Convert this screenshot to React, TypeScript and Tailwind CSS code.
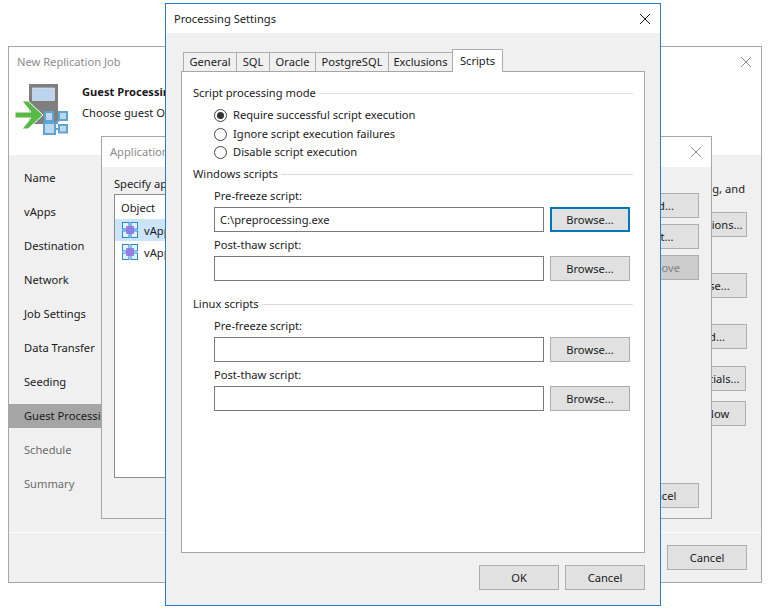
const font = "font-['Noto_Sans','Open_Sans',sans-serif]";

function X({ c }: { c: string }) {
  return (
    <svg width="12" height="12" viewBox="0 0 12 12" className="shrink-0">
      <path d="M1 1 L11 11 M11 1 L1 11" stroke={c} strokeWidth="1" fill="none" />
    </svg>
  );
}

function Btn({ label, w = "w-[80px]", tone = "normal", extra = "" }: { label: string; w?: string; tone?: "normal" | "focus" | "disabled"; extra?: string }) {
  const cls =
    tone === "focus"
      ? "border-2 border-[#0078b4] bg-[#e1e1e1] text-[#1a1a1a]"
      : tone === "disabled"
        ? "border border-[#adadad] bg-[#cccccc] text-[#838383]"
        : "border border-[#adadad] bg-[#e1e1e1] text-[#1a1a1a]";
  return <div className={`${w} h-[25px] flex items-center justify-center shrink-0 whitespace-nowrap ${cls} ${extra}`}>{label}</div>;
}

function VApp() {
  return (
    <svg width="16" height="16" viewBox="0 0 16 16" className="shrink-0">
      <g fill="#e4f2fb" stroke="#2b86d6" strokeWidth="1">
        <rect x="0.5" y="0.5" width="6.5" height="6.5" />
        <rect x="9" y="0.5" width="6.5" height="6.5" />
        <rect x="0.5" y="9" width="6.5" height="6.5" />
        <rect x="9" y="9" width="6.5" height="6.5" />
      </g>
      <rect x="4" y="4" width="8" height="8" fill="#8f74e2" fillOpacity="0.85" />
    </svg>
  );
}

function WizardIcon() {
  return (
    <svg width="54" height="52" viewBox="0 0 54 52" className="shrink-0">
      <rect x="14" y="0" width="29" height="40" fill="#7f7f7f" />
      <rect x="17.5" y="4" width="22" height="12.5" fill="#bcd5ee" stroke="#e8eff7" strokeWidth="0.6" />
      <path d="M7 17 H13 L28 31 L13 45 H7 L16 34 H0 V28 H16 Z" fill="#58b947" stroke="#ffffff" strokeWidth="1" />
      <g stroke="#5fa3cf" strokeWidth="2" fill="#bcd7f0">
        <path d="M39 41 L45 35 M40 45 L45 45" fill="none" />
        <rect x="30" y="28" width="8" height="9" />
        <rect x="44" y="28" width="8" height="8" />
        <rect x="29" y="39" width="11" height="11" />
        <rect x="44" y="41" width="8" height="7.5" />
      </g>
    </svg>
  );
}

function Radio({ label, on = false, extra = "" }: { label: string; on?: boolean; extra?: string }) {
  return (
    <div className={`flex items-center h-[18px] ${extra}`}>
      <div className="w-[13px] h-[13px] rounded-full border border-[#444444] bg-white flex items-center justify-center shrink-0">
        {on && <div className="w-[7px] h-[7px] rounded-full bg-[#333333]" />}
      </div>
      <span className="ml-[6px]">{label}</span>
    </div>
  );
}

function Group({ title, extra = "" }: { title: string; extra?: string }) {
  return (
    <div className={`flex items-center h-[16px] ${extra}`}>
      <span className="whitespace-nowrap mr-[3px]">{title}</span>
      <div className="flex-1 h-px bg-[#dcdcdc]" />
    </div>
  );
}

function ScriptRow({ label, value = "", focus = false, gap = "" }: { label: string; value?: string; focus?: boolean; gap?: string }) {
  return (
    <div className={`pl-[21px] ${gap}`}>
      <div className="h-[16px] flex items-center">{label}</div>
      <div className="flex gap-[6px] mt-[3px] pr-[3px]">
        <div className="w-[330px] h-[25px] border border-[#7a7a7a] bg-white flex items-center pl-[5px] text-[#222222]">{value}</div>
        <Btn label="Browse..." tone={focus ? "focus" : "normal"} />
      </div>
    </div>
  );
}

const tabs = [
  ["General", "w-[54px]"],
  ["SQL", "w-[34px]"],
  ["Oracle", "w-[47px]"],
  ["PostgreSQL", "w-[74px]"],
  ["Exclusions", "w-[65px]"],
];

const nav = ["Name", "vApps", "Destination", "Network", "Job Settings", "Data Transfer", "Seeding", "Guest Processing", "Schedule", "Summary"];

export default function App() {
  return (
    <div className={`relative w-[770px] h-[611px] bg-white overflow-hidden text-[11.15px] leading-[16px] text-[#1a1a1a] ${font}`}>
      {/* Wizard window */}
      <div className="absolute left-[8px] top-[46px] w-[754px] h-[537px] border border-[#a6a6a6] bg-[#f0f0f0] flex flex-col">
        <div className="bg-white h-[108px] shrink-0">
          <div className="h-[29px] flex items-center justify-between pl-[8px] pr-[9px] text-[#8c8c8c]">
            <span>New Replication Job</span>
            <X c="#8c8c8c" />
          </div>
          <div className="flex pl-[6px] pt-[8px]">
            <WizardIcon />
            <div className="ml-[13px] -mt-[2px]">
              <div className="font-bold h-[20px] flex items-center whitespace-nowrap">Guest Processing</div>
              <div className="h-[20px] mt-px flex items-center whitespace-nowrap">Choose guest OS processing options available for running VMs.</div>
            </div>
          </div>
        </div>
        <div className="flex flex-1 min-h-0">
          <div className="w-[170px] pt-[11px] flex flex-col gap-[10px] shrink-0">
            {nav.map((n, i) => (
              <div key={n} className={`h-[24px] flex items-center pl-[15px] whitespace-nowrap ${i === 7 ? "bg-[#a5a5a5]" : ""} ${i > 7 ? "text-[#6d6d6d]" : ""}`}>
                {n}
              </div>
            ))}
          </div>
          <div className="flex-1 flex flex-col items-end pr-[14px] pt-[26px] text-right">
            <div className="h-[16px] whitespace-nowrap mr-[2px]">Enable application-aware processing, and</div>
            <Btn label="Applications..." extra="mt-[15px] pr-[2px]" />
            <Btn label="Browse..." extra="mt-[36px] pr-[2px]" />
            <Btn label="Add..." extra="mt-[26px] pl-[6px]" />
            <Btn label="Credentials..." w="w-[81px]" extra="mt-[17px] mr-[1px]" />
            <Btn label="Test Now" w="w-[81px]" extra="mt-[10px] mr-[1px]" />
          </div>
        </div>
        <div className="h-[50px] shrink-0 border-t border-white flex items-center justify-end pr-[14px]">
          <Btn label="Cancel" />
        </div>
      </div>

      {/* Application window */}
      <div className="absolute left-[101px] top-[136px] w-[611px] h-[383px] border border-[#a6a6a6] bg-[#f0f0f0] flex flex-col">
        <div className="h-[30px] bg-white flex items-center justify-between pl-[8px] pr-[9px] text-[#8c8c8c] shrink-0">
          <span>Application-Aware Processing Options</span>
          <X c="#8c8c8c" />
        </div>
        <div className="flex-1 flex pl-[12px] pr-[12px] pt-[8px] pb-[10px] gap-[6px] min-h-0">
          <div className="flex-1 flex flex-col min-w-0">
            <div className="h-[18px] flex items-center">Specify application-aware processing settings:</div>
            <div className="mt-[1px] h-[284px] border border-[#8c8c8c] bg-white">
              <div className="h-[24px] flex items-center pl-[6px] pt-px">Object</div>
              <div className="h-[22px] bg-[#cce4f7] flex items-center pl-[7px] gap-[6px]">
                <VApp />
                <span className="pt-px">vApp1</span>
              </div>
              <div className="h-[22px] flex items-center pl-[7px] gap-[6px]">
                <VApp />
                <span className="pt-px">vApp2</span>
              </div>
            </div>
          </div>
          <div className="flex flex-col shrink-0 pt-[18px]">
            <Btn label="Add..." />
            <Btn label="Edit..." extra="mt-[6px]" />
            <Btn label="Remove" tone="disabled" extra="mt-[6px]" />
            <div className="flex-1" />
            <Btn label="Cancel" />
          </div>
        </div>
      </div>

      {/* Processing Settings window */}
      <div className="absolute left-[165px] top-[3px] w-[496px] h-[603px] border border-[#2a7cc7] bg-[#f0f0f0] flex flex-col">
        <div className="h-[29px] bg-white flex items-center justify-between pl-[8px] pr-[9px] shrink-0">
          <span>Processing Settings</span>
          <X c="#1a1a1a" />
        </div>
        <div className="flex-1 flex flex-col px-[15px] pt-[16px] min-h-0">
          <div className="flex items-end h-[22px] pl-[2px] shrink-0">
            {tabs.map(([t, w]) => (
              <div key={t} className={`${w} h-[19px] border border-[#adadad] border-b-0 -ml-px first:ml-0 bg-[#f0f0f0] flex items-center justify-center`}>
                {t}
              </div>
            ))}
            <div className="w-[51px] h-[23px] border border-[#adadad] border-b-0 -ml-px bg-white flex items-center justify-center z-10 -mb-px">Scripts</div>
          </div>
          <div className="h-[482px] border border-[#a6a6a6] bg-white px-[11px] pt-[13px] shrink-0">
            <Group title="Script processing mode" />
            <div className="pl-[21px] mt-[5px]">
              <Radio label="Require successful script execution" on />
              <Radio label="Ignore script execution failures" extra="mt-px" />
              <Radio label="Disable script execution" />
            </div>
            <Group title="Windows scripts" extra="mt-[5px]" />
            <ScriptRow label="Pre-freeze script:" value="C:\preprocessing.exe" focus gap="mt-[6px]" />
            <ScriptRow label="Post-thaw script:" gap="mt-[5px]" />
            <Group title="Linux scripts" extra="mt-[15px]" />
            <ScriptRow label="Pre-freeze script:" gap="mt-[6px]" />
            <ScriptRow label="Post-thaw script:" gap="mt-[5px]" />
          </div>
          <div className="flex justify-end gap-[6px] mt-[12px]">
            <Btn label="OK" />
            <Btn label="Cancel" />
          </div>
        </div>
      </div>
    </div>
  );
}
